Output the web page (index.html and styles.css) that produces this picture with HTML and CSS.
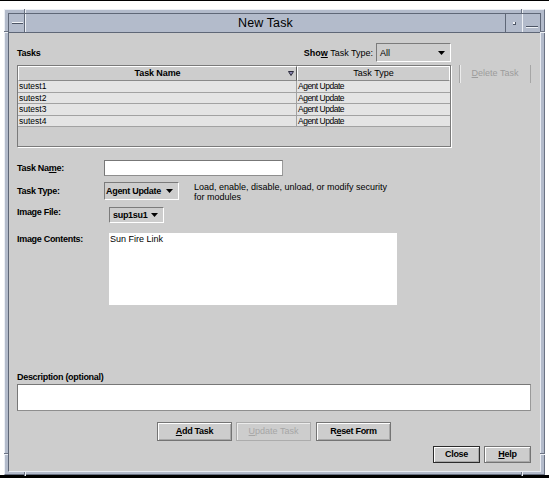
FILE: index.html
```
<!DOCTYPE html>
<html>
<head>
<meta charset="utf-8">
<title>New Task</title>
<link rel="stylesheet" href="styles.css">
</head>
<body>
<div class="rule-top"></div>
<div class="window">
  <span class="tick tv tick-tl"></span>
  <span class="tick tv tick-tr"></span>
  <span class="tick tv tick-bl"></span>
  <span class="tick tv tick-br"></span>
  <span class="tick th-tick tick-lt"></span>
  <span class="tick th-tick tick-lb"></span>
  <span class="tick th-tick tick-rt"></span>
  <span class="tick th-tick tick-rb"></span>

  <div class="titlebar">
    <div class="tb-menu"><span class="menu-glyph"></span></div>
    <div class="title">New Task</div>
    <div class="tb-dot"><span class="dot-glyph"></span></div>
    <div class="tb-mini"><span class="mini-glyph"></span></div>
  </div>

  <div class="content">
    <div class="top-row">
      <span class="lab">Tasks</span>
      <div class="filter">
        <span class="filter-label"><b>Sho<u>w</u></b> Task Type:</span>
        <div class="combo combo-all">
          <span class="combo-text">All</span>
          <svg class="arrow" width="7" height="4" viewBox="0 0 7 4"><polygon points="0,0 7,0 3.5,4" fill="#000"/></svg>
        </div>
      </div>
    </div>

    <div class="table-row">
      <div class="table">
        <div class="thead">
          <div class="hcell hname">Task Name
            <svg class="sort" width="6" height="5" viewBox="0 0 6 5"><polygon points="0.5,0.5 5.5,0.5 3,4.5" fill="#8c88b4" stroke="#2a2a3a" stroke-width="1"/></svg>
          </div>
          <div class="hcell htype">Task Type</div>
        </div>
        <div class="trow"><div class="cell c1">sutest1</div><div class="cell c2">Agent Update</div></div>
        <div class="trow"><div class="cell c1">sutest2</div><div class="cell c2">Agent Update</div></div>
        <div class="trow"><div class="cell c1">sutest3</div><div class="cell c2">Agent Update</div></div>
        <div class="trow"><div class="cell c1">sutest4</div><div class="cell c2">Agent Update</div></div>
      </div>
      <div class="btn-delete"><u>D</u>elete Task</div>
    </div>

    <div class="frow row-name">
      <span class="lab lab-col">Task Na<u>m</u>e:</span>
      <div class="field name-field"></div>
    </div>

    <div class="frow row-type">
      <span class="lab lab-col">Task Type:</span>
      <div class="combo combo-type">
        <span class="combo-text bold">Agent Update</span>
        <svg class="arrow" width="7" height="4" viewBox="0 0 7 4"><polygon points="0,0 7,0 3.5,4" fill="#000"/></svg>
      </div>
      <div class="help-text">Load, enable, disable, unload, or modify security<br>for modules</div>
    </div>

    <div class="frow row-file">
      <span class="lab lab-wide">Image File:</span>
      <div class="combo combo-file">
        <span class="combo-text bold">sup1su1</span>
        <svg class="arrow" width="7" height="4" viewBox="0 0 7 4"><polygon points="0,0 7,0 3.5,4" fill="#000"/></svg>
      </div>
    </div>

    <div class="frow row-contents">
      <span class="lab lab-wide">Image Contents:</span>
      <div class="textarea">Sun Fire Link</div>
    </div>

    <span class="lab desc-label">Description (optional)</span>
    <div class="field desc-field"></div>

    <div class="btn-row">
      <div class="btn"><u>A</u>dd Task</div>
      <div class="btn disabled"><u>U</u>pdate Task</div>
      <div class="btn">R<u>e</u>set Form</div>
    </div>

    <div class="btn-row2">
      <div class="btn small default">Close</div>
      <div class="btn small"><u>H</u>elp</div>
    </div>
  </div>
</div>
<div class="rule-bottom"></div>
</body>
</html>
```

FILE: styles.css
```
* { box-sizing: border-box; }
html, body { margin: 0; padding: 0; }
body {
  width: 549px;
  height: 478px;
  overflow: hidden;
  background: #ffffff;
  font-family: "Liberation Sans", Arial, sans-serif;
  color: #000;
}
u { text-decoration: underline; text-underline-offset: 1px; }

.rule-top { height: 1px; background: #000; }
.rule-bottom { height: 3px; background: #000; }

.window {
  position: relative;
  margin: 8px 0 0 4px;
  width: 541px;
  height: 466px;
  background: #b3bbcb;
  border: 1px solid;
  border-color: #eceff5 #6b7384 #6b7384 #eceff5;
  padding: 3px 3px 2px 3px;
  display: flex;
  flex-direction: column;
}

/* frame corner breaks */
.tick { position: absolute; display: block; }
.tv { width: 2px; border-left: 1px solid #6b7384; border-right: 1px solid #eef1f6; }
.th-tick { height: 2px; border-top: 1px solid #6b7384; border-bottom: 1px solid #eef1f6; }
.tick-tl { left: 19px; top: -1px; height: 4px; }
.tick-tr { left: 516px; top: -1px; height: 4px; }
.tick-bl { left: 19px; top: 462px; height: 4px; }
.tick-br { left: 516px; top: 462px; height: 4px; }
.tick-lt { left: -1px; top: 21px; width: 4px; }
.tick-lb { left: -1px; top: 443px; width: 4px; }
.tick-rt { left: 535px; top: 21px; width: 5px; }
.tick-rb { left: 535px; top: 443px; width: 5px; }

.titlebar {
  height: 19px;
  display: flex;
  border-top: 1px solid #5f6777;
  border-left: 1px solid #5f6777;
  border-right: 1px solid #5f6777;
  background: #b3bbcb;
}
.tb-menu {
  width: 16px;
  border-right: 1px solid #5f6777;
  display: flex;
  align-items: center;
  justify-content: center;
}
.menu-glyph {
  display: block;
  width: 11px;
  height: 2px;
  margin-left: 2px;
  border-top: 1px solid #f2f4f8;
  border-bottom: 1px solid #4c5464;
}
.title {
  flex: 1;
  border-left: 1px solid #eef1f6;
  text-align: center;
  font-size: 12.5px;
  line-height: 18px;
  letter-spacing: 0.1px;
}
.tb-dot {
  width: 17px;
  border-left: 1px solid #5f6777;
  display: flex;
  align-items: center;
  justify-content: center;
}
.dot-glyph {
  display: block;
  width: 3px;
  height: 3px;
  margin-left: 1px;
  background: #f2f4f8;
  border-right: 1px solid #4c5464;
  border-bottom: 1px solid #4c5464;
}
.tb-mini {
  width: 18px;
  border-left: 1px solid #eef1f6;
  display: flex;
  align-items: flex-end;
  justify-content: center;
  padding-bottom: 4px;
}
.mini-glyph {
  display: block;
  width: 12px;
  height: 2px;
  border-top: 1px solid #4c5464;
  border-bottom: 1px solid #eef1f6;
}

.content {
  height: 440px;
  background: #cdcdcd;
  border: 1px solid;
  border-color: #5f6777 #e8ebf2 #e8ebf2 #5f6777;
  padding: 10px 9px 0 8px;
  display: flex;
  flex-direction: column;
}

.lab {
  font-size: 9px;
  font-weight: bold;
  letter-spacing: -0.3px;
  white-space: nowrap;
  line-height: 10px;
}
.bold { font-weight: bold; letter-spacing: -0.3px; }

.top-row {
  width: 434px;
  height: 19px;
  display: flex;
  align-items: center;
  justify-content: space-between;
}
.filter { display: flex; align-items: center; height: 19px; gap: 3px; }
.filter-label { font-size: 9px; white-space: nowrap; }

.combo {
  display: flex;
  align-items: center;
  justify-content: space-between;
  border: 1px solid;
  border-color: #7b7b7b #ffffff #ffffff #7b7b7b;
  font-size: 9px;
  white-space: nowrap;
}
.combo-all { width: 75px; height: 19px; padding: 0 5px 0 3px; }
.combo-type { width: 75px; height: 18px; padding: 0 5px 0 1px; }
.combo-file { width: 55px; height: 16px; padding: 0 5px 0 3px; margin-top: 7px; }
.arrow { display: block; }

.table-row { display: flex; gap: 8px; margin-top: 3px; align-items: flex-start; }
.table {
  width: 434px;
  height: 82px;
  border: 1px solid #7a7a7a;
  box-shadow: 1px 1px 0 #ffffff;
  background: #cdcdcd;
}
.thead { display: flex; height: 15px; }
.hcell {
  height: 15px;
  border-top: 1px solid #ffffff;
  border-left: 1px solid #ffffff;
  border-bottom: 1px solid #8a8a8a;
  border-right: 1px solid #5e5e5e;
  font-size: 9px;
  line-height: 13px;
  text-align: center;
  white-space: nowrap;
}
.hname { width: 279px; position: relative; font-weight: bold; letter-spacing: -0.1px; }
.htype { width: 153px; border-right-color: #ffffff; }
.sort { position: absolute; right: 2px; top: 4px; }
.trow { display: flex; height: 11.5px; background: #e4e4e4; border-bottom: 1px solid #a2a2a2; }
.cell { font-size: 8.5px; line-height: 10px; white-space: nowrap; overflow: hidden; padding-left: 1px; }
.c1 { width: 279px; border-right: 1px solid #a2a2a2; }
.c2 { width: 153px; letter-spacing: -0.5px; }

.btn-delete {
  width: 72px;
  height: 18px;
  border-left: 1px solid #a6a6a6;
  border-right: 1px solid #a6a6a6;
  box-shadow: inset 1px 0 0 #ececec;
  color: #9c9c9c;
  font-size: 9px;
  line-height: 17px;
  text-align: center;
  white-space: nowrap;
}

.frow { display: flex; }
.lab-col { width: 87px; }
.lab-wide { width: 92px; }
.row-name { margin-top: 13px; height: 16px; align-items: center; }
.field {
  background: #ffffff;
  border: 1px solid;
  border-color: #777777 #9a9a9a #8e8e8e #777777;
}
.name-field { width: 179px; height: 16px; }

.row-type { margin-top: 6px; height: 18px; align-items: center; }
.help-text {
  align-self: flex-start;
  margin-left: 15px;
  font-size: 9px;
  line-height: 10px;
  white-space: nowrap;
}

.row-file { height: 23px; align-items: flex-start; }
.row-file .lab { margin-top: 7px; }
.row-contents { align-items: flex-start; }
.row-contents .lab { margin-top: 11px; }
.textarea {
  margin-top: 10px;
  width: 288px;
  height: 72px;
  background: #ffffff;
  font-size: 9px;
  line-height: 10px;
  padding: 1px 1px;
  white-space: nowrap;
}

.desc-label { margin-top: 67px; display: block; }
.desc-field { margin-top: 2px; width: 514px; height: 27px; }

.btn-row { display: flex; margin-top: 11px; padding-left: 140px; gap: 4px; }
.btn-row .btn:last-child { margin-left: 1px; }
.btn {
  width: 75px;
  height: 19px;
  border: 1px solid #747474;
  box-shadow: inset 1px 1px 0 #ffffff, inset -1px -1px 0 #a8a8a8;
  background: #cdcdcd;
  font-size: 9px;
  font-weight: bold;
  letter-spacing: -0.3px;
  line-height: 17px;
  text-align: center;
  white-space: nowrap;
}
.btn.disabled {
  border-color: #acacac;
  box-shadow: inset 1px 1px 0 #ececec;
  color: #a6a6a6;
  font-weight: normal;
  letter-spacing: 0;
}
.btn-row2 { display: flex; justify-content: flex-end; gap: 4px; margin-top: 5px; }
.btn.small { width: 47px; height: 17px; line-height: 15px; }
.btn.default { border-color: #2c2c2c; }
```
